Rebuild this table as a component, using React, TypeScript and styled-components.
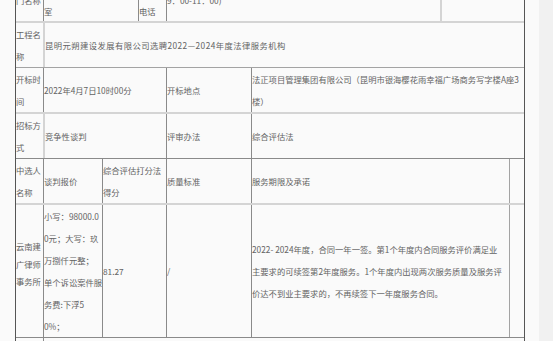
import React from "react";
import { createGlobalStyle, styled } from "styled-components";

type Edge = "none" | "dark" | "soft" | "mid";

const edgeColor: Record<Edge, string> = {
  none: "transparent",
  dark: "#8a8a8a",
  soft: "#d4d4d4",
  mid: "#a3a3a3",
};

const GlobalStyle = createGlobalStyle`
  html, body {
    margin: 0;
    padding: 0;
    background: #fafafa;
    overflow: hidden;
  }
  body {
    font-family: "Noto Sans CJK SC", "Noto Sans", sans-serif;
  }
`;

const App = () => {
  return (
    <Page>
      <GlobalStyle />
      <Main>
        <Table>
          <Row $h={43} $line="soft" $lw={2}>
            <Cell $edge="none">门名称</Cell>
            <Cell $span={2}>
              昆明市西山区办公
              <br />室
            </Cell>
            <Cell>
              联系
              <br />
              电话
            </Cell>
            <Cell $span={2}>9：00-11：00)</Cell>
            <Cell $span={2} $edge="soft" />
          </Row>

          <Row $h={44} $line="mid">
            <Cell $edge="none">
              工程名
              <br />称
            </Cell>
            <Cell $span={7} $edge="soft" $ls={0.45}>
              昆明元朔建设发展有限公司选聘2022—2024年度法律服务机构
            </Cell>
          </Row>

          <Row $h={44} $line="soft" $lw={2}>
            <Cell $edge="none">
              开标时
              <br />间
            </Cell>
            <Cell $span={3}>2022年4月7日10时00分</Cell>
            <Cell>开标地点</Cell>
            <Cell $span={3}>
              法正项目管理集团有限公司（昆明市银海樱花雨幸福广场商务写字楼A座3
              <br />
              楼）
            </Cell>
          </Row>

          <Row $h={44} $line="dark">
            <Cell $edge="none">
              招标方
              <br />式
            </Cell>
            <Cell $span={3} $edge="soft">
              竞争性谈判
            </Cell>
            <Cell>评审办法</Cell>
            <Cell $span={3}>综合评估法</Cell>
          </Row>

          <Row $h={44} $line="soft" $lw={2}>
            <Cell $edge="none">
              中选人
              <br />
              名称
            </Cell>
            <Cell>谈判报价</Cell>
            <Cell $span={2}>
              综合评估打分法
              <br />
              得分
            </Cell>
            <Cell>质量标准</Cell>
            <Cell $span={2}>服务期限及承诺</Cell>
            <Cell $edge="mid" />
          </Row>

          <Row $h={132} $line="dark">
            <Cell $edge="none" $lh={17.5} $pb={13}>
              云南建
              <br />
              广律师
              <br />
              事务所
            </Cell>
            <Cell>
              小写：98000.0
              <br />
              0元；大写：玖
              <br />
              万捌仟元整；
              <br />
              单个诉讼案件服
              <br />
              务费:下浮5
              <br />
              0%；
            </Cell>
            <Cell $span={2}>81.27</Cell>
            <Cell>/</Cell>
            <Cell $span={2}>
              2022- 2024年度，合同一年一签。第1个年度内合同服务评价满足业
              <br />
              主要求的可续签第2年度服务。1个年度内出现两次服务质量及服务评
              <br />
              价达不到业主要求的，不再续签下一年度服务合同。
            </Cell>
            <Cell $edge="mid" />
          </Row>

          <Row $h={44} $line="soft">
            <Cell $edge="none" />
            <Cell $span={7} />
          </Row>
        </Table>
      </Main>
      <Gutter />
    </Page>
  );
};

const Page = styled.div`
  display: flex;
  width: 553px;
  height: 341px;
  overflow: hidden;
`;

const Main = styled.div`
  flex: 1;
  padding-left: 15px;
  margin-top: -22px;
`;

const Gutter = styled.div`
  width: 14px;
  height: 341px;
  background: #f1f1f1;
`;

const Table = styled.div`
  width: 510px;
  box-sizing: border-box;
  border-left: 1px solid #555;
  border-right: 1px solid #555;
  background: #fafafa;
`;

const Row = styled.div<{ $h: number; $line: Edge; $lw?: number }>`
  display: grid;
  grid-template-columns: 27px 59px 36px 28px 85px 189px 69px 15px;
  grid-auto-rows: ${(p) => p.$h}px;
  border-bottom: ${(p) => p.$lw ?? 1}px solid ${(p) => edgeColor[p.$line]};
`;

const Cell = styled.div<{
  $span?: number;
  $edge?: Edge;
  $lh?: number;
  $pb?: number;
  $ls?: number;
}>`
  grid-column: span ${(p) => p.$span ?? 1};
  box-sizing: border-box;
  display: flex;
  align-items: center;
  border-left: ${(p) => (p.$edge === "soft" ? 2 : p.$edge === "none" ? 0 : 1)}px solid
    ${(p) => edgeColor[p.$edge ?? "dark"]};
  padding-bottom: ${(p) => p.$pb ?? 0}px;
  font-size: 8.3px;
  line-height: ${(p) => p.$lh ?? 22}px;
  letter-spacing: ${(p) => p.$ls ?? 0}px;
  color: #636363;
  white-space: nowrap;
`;

export default App;
